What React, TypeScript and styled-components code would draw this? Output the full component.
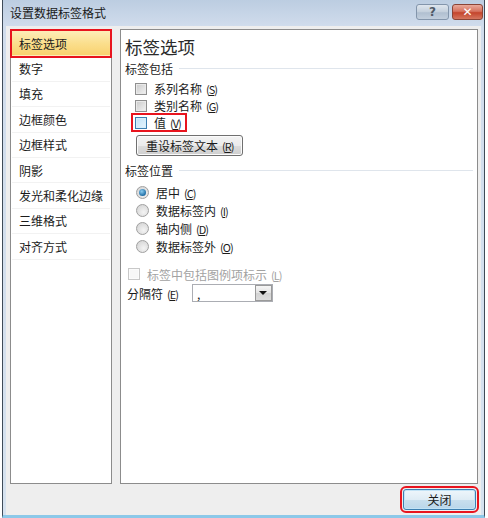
import React from "react";
import styled, { createGlobalStyle, css } from "styled-components";

const Global = createGlobalStyle`
  html, body { margin: 0; padding: 0; background: #ffffff; }
  body { font-family: "Noto Sans CJK SC", "Noto Sans", sans-serif; font-size: 12px; color: #1b1b1b; }
  #root { width: 488px; height: 518px; overflow: hidden; }
`;

const Window = styled.div`
  margin-left: 2px;
  width: 483px;
  height: 518px;
  box-sizing: border-box;
  border-left: 1px solid #3f4b58;
  border-right: 1px solid #3f4b58;
  border-bottom: 3px solid #8cc8e8;
  background: linear-gradient(#bccde1, #d0dcec 26px, #d6e2ef);
  display: flex;
  flex-direction: column;
`;

const TitleBar = styled.div`
  height: 26px;
  flex: none;
  display: flex;
  align-items: flex-start;
  padding: 0 1px 0 7px;
`;

const Title = styled.div`
  line-height: 26px;
  font-size: 12px;
  color: #1a1a1a;
  flex: 1;
`;

const CaptionButton = styled.div<{ $close?: boolean }>`
  margin-top: 4px;
  height: 16px;
  box-sizing: border-box;
  border-radius: 3px;
  display: flex;
  align-items: center;
  justify-content: center;
  font-family: "DejaVu Sans", sans-serif;
  font-weight: bold;
  ${(p) =>
    p.$close
      ? css`
          width: 31px;
          margin-left: 3px;
          border: 1px solid #8a4436;
          background: linear-gradient(#e9a99a, #d6735f 45%, #c4452c 55%, #d5765f);
          color: #ffffff;
          font-size: 12px;
        `
      : css`
          width: 33px;
          border: 1px solid #8395ab;
          background: linear-gradient(#dfe6ee, #c3cfdc 50%, #b0bfd0 55%, #c2cfdd);
          color: #505a66;
          font-size: 12px;
        `}
`;

const Client = styled.div`
  flex: 1;
  margin: 0 3px 0 3px;
  background: #eeeeee;
  display: flex;
  flex-direction: column;
  min-height: 0;
`;

const Body = styled.div`
  flex: 1;
  display: flex;
  gap: 8px;
  padding: 3px 3px 0 4px;
  min-height: 0;
`;

const Panel = styled.div<{ $width?: number }>`
  background: #ffffff;
  border: 1px solid #8c8c8c;
  box-sizing: border-box;
  ${(p) => (p.$width ? css`width: ${p.$width}px; flex: none;` : css`flex: 1;`)}
`;

const NavList = styled.div`
  display: flex;
  flex-direction: column;
  padding: 1px 1px 0 1px;
`;

const NavItem = styled.div<{ $selected?: boolean }>`
  height: 25.4px;
  box-sizing: border-box;
  display: flex;
  align-items: center;
  padding-left: 7px;
  font-size: 12px;
  border-bottom: 1px solid #f2f2f2;
  ${(p) =>
    p.$selected &&
    css`
      background: linear-gradient(#fdedb8, #fbdf8e 50%, #f9d26f);
      border-bottom-color: transparent;
      outline: 2px solid #e8141e;
      outline-offset: 0px;
    `}
`;

const Content = styled.div`
  display: flex;
  flex-direction: column;
  padding: 7px 4px 0 4px;
`;

const Heading = styled.div`
  font-size: 17.5px;
  line-height: 20px;
  height: 20px;
  color: #2a2a2a;
`;

const SectionTitle = styled.div<{ $mt?: number }>`
  display: flex;
  align-items: center;
  gap: 6px;
  height: 18px;
  margin-top: ${(p) => p.$mt ?? 0}px;
  &::after {
    content: "";
    flex: 1;
    height: 1px;
    background: #dfe5ec;
  }
`;

const Options = styled.div<{ $mt: number; $indent?: number }>`
  display: flex;
  flex-direction: column;
  align-items: flex-start;
  margin-top: ${(p) => p.$mt}px;
  padding-left: ${(p) => p.$indent ?? 10}px;
`;

const OptionRow = styled.div<{ $h: number; $disabled?: boolean; $mark?: boolean }>`
  height: ${(p) => p.$h}px;
  display: flex;
  align-items: center;
  gap: 7px;
  color: ${(p) => (p.$disabled ? "#a2a2a2" : "#1b1b1b")};
  ${(p) =>
    p.$mark &&
    css`
      outline: 2px solid #e8141e;
      outline-offset: -1px;
      padding: 0 5px 0 3px;
      margin-left: -3px;
    `}
`;

const CheckBox = styled.span<{ $hover?: boolean; $disabled?: boolean }>`
  width: 12px;
  height: 12px;
  box-sizing: border-box;
  flex: none;
  border: 1px solid ${(p) => (p.$hover ? "#3c7fb1" : p.$disabled ? "#c8c8c8" : "#8f8f8f")};
  background: ${(p) =>
    p.$hover
      ? "linear-gradient(135deg, #bfe3f8, #e6f5fd)"
      : p.$disabled
      ? "#f7f7f7"
      : "linear-gradient(135deg, #c9c9c9, #f3f3f3)"};
  box-shadow: inset 0 0 0 1px ${(p) => (p.$hover ? "#d6effc" : p.$disabled ? "#fbfbfb" : "#e9e9e9")};
`;

const Radio = styled.span<{ $checked?: boolean }>`
  width: 13px;
  height: 13px;
  box-sizing: border-box;
  flex: none;
  border-radius: 50%;
  border: 1px solid #a0a0a0;
  background: radial-gradient(circle at 60% 65%, #f4f4f4, #cfcfcf);
  display: flex;
  align-items: center;
  justify-content: center;
  margin-left: 1px;
  &::after {
    content: "";
    display: ${(p) => (p.$checked ? "block" : "none")};
    width: 7px;
    height: 7px;
    border-radius: 50%;
    background: radial-gradient(circle at 40% 35%, #8ccdf1, #1f6ea6 70%, #174f7c);
  }
`;

const Key = styled.span`
  font-size: 11px;
  letter-spacing: -1px;
  margin-left: 4px;
  u { text-decoration: underline; text-underline-offset: 1px; }
`;

const PushButton = styled.div<{ $default?: boolean }>`
  height: 21px;
  box-sizing: border-box;
  border-radius: 3px;
  display: inline-flex;
  align-items: center;
  justify-content: center;
  font-size: 12px;
  color: #1b1b1b;
  ${(p) =>
    p.$default
      ? css`
          width: 73px;
          border: 1px solid #3c7fb1;
          background: linear-gradient(#eef6fb, #dfecf5 50%, #c9dfee 52%, #b9d6ea);
          box-shadow: inset 0 0 0 1px #c2e3f6;
          outline: 2px solid #e8141e;
          outline-offset: 1px;
        `
      : css`
          padding: 0 9px;
          border: 1px solid #707070;
          background: linear-gradient(#f3f3f3, #ebebeb 50%, #dddddd 51%, #cfcfcf);
          box-shadow: inset 0 0 0 1px #fbfbfb;
        `}
`;

const FieldRow = styled.div`
  height: 20px;
  display: flex;
  align-items: center;
  padding-left: 2px;
`;

const Select = styled.div`
  margin-left: 14px;
  width: 81px;
  height: 18px;
  box-sizing: border-box;
  border: 1px solid #abadb3;
  background: #ffffff;
  display: flex;
  align-items: center;
  justify-content: space-between;
  padding-left: 4px;
`;

const DropButton = styled.span`
  width: 17px;
  height: 16px;
  box-sizing: border-box;
  border: 1px solid #9a9a9a;
  background: linear-gradient(#f6f6f6, #e3e3e3 50%, #d3d3d3 51%, #dcdcdc);
  display: flex;
  align-items: center;
  justify-content: center;
  &::after {
    content: "";
    border-left: 4px solid transparent;
    border-right: 4px solid transparent;
    border-top: 4px solid #111;
  }
`;

const Footer = styled.div`
  height: 31px;
  flex: none;
  display: flex;
  align-items: center;
  justify-content: flex-end;
  padding-right: 5px;
`;

const navItems = ["标签选项", "数字", "填充", "边框颜色", "边框样式", "阴影", "发光和柔化边缘", "三维格式", "对齐方式"];

const K = ({ k }: { k: string }) => (
  <Key>
    (<u>{k}</u>)
  </Key>
);

export default function App() {
  return (
    <>
      <Global />
      <Window>
        <TitleBar>
          <Title>设置数据标签格式</Title>
          <CaptionButton>?</CaptionButton>
          <CaptionButton $close>✕</CaptionButton>
        </TitleBar>
        <Client>
          <Body>
            <Panel $width={102}>
              <NavList>
                {navItems.map((t, i) => (
                  <NavItem key={t} $selected={i === 0}>
                    {t}
                  </NavItem>
                ))}
              </NavList>
            </Panel>
            <Panel>
              <Content>
                <Heading>标签选项</Heading>
                <SectionTitle $mt={2}>标签包括</SectionTitle>
                <Options $mt={3}>
                  <OptionRow $h={17}>
                    <CheckBox />
                    <span>
                      系列名称
                      <K k="S" />
                    </span>
                  </OptionRow>
                  <OptionRow $h={17}>
                    <CheckBox />
                    <span>
                      类别名称
                      <K k="G" />
                    </span>
                  </OptionRow>
                  <OptionRow $h={17} $mark>
                    <CheckBox $hover />
                    <span>
                      值
                      <K k="V" />
                    </span>
                  </OptionRow>
                </Options>
                <Options $mt={4} $indent={11}>
                  <PushButton>
                    重设标签文本
                    <K k="R" />
                  </PushButton>
                </Options>
                <SectionTitle $mt={5}>标签位置</SectionTitle>
                <Options $mt={4}>
                  <OptionRow $h={18}>
                    <Radio $checked />
                    <span>
                      居中
                      <K k="C" />
                    </span>
                  </OptionRow>
                  <OptionRow $h={18}>
                    <Radio />
                    <span>
                      数据标签内
                      <K k="I" />
                    </span>
                  </OptionRow>
                  <OptionRow $h={18}>
                    <Radio />
                    <span>
                      轴内侧
                      <K k="D" />
                    </span>
                  </OptionRow>
                  <OptionRow $h={18}>
                    <Radio />
                    <span>
                      数据标签外
                      <K k="O" />
                    </span>
                  </OptionRow>
                </Options>
                <Options $mt={10} $indent={3}>
                  <OptionRow $h={18} $disabled>
                    <CheckBox $disabled />
                    <span>
                      标签中包括图例项标示
                      <K k="L" />
                    </span>
                  </OptionRow>
                </Options>
                <FieldRow>
                  <span>
                    分隔符
                    <K k="E" />
                  </span>
                  <Select>
                    <span>,</span>
                    <DropButton />
                  </Select>
                </FieldRow>
              </Content>
            </Panel>
          </Body>
          <Footer>
            <PushButton $default>关闭</PushButton>
          </Footer>
        </Client>
      </Window>
    </>
  );
}
